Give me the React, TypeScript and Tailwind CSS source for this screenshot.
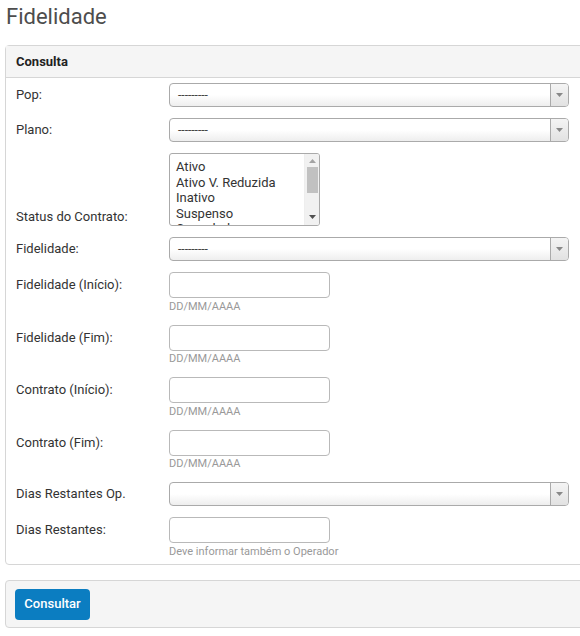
const font = { fontFamily: "Roboto, 'Liberation Sans', sans-serif" };

const Select = ({ text = "---------" }: { text?: string }) => (
  <div className="flex h-[24px] w-[400px] rounded-[4px] border border-[#aaa] bg-gradient-to-b from-white from-50% to-[#eeeeee] overflow-hidden">
    <div className="flex-1 pl-[8px] text-[12px] leading-[22px] text-[#444]">{text}</div>
    <div className="flex w-[18px] items-center justify-center border-l border-[#aaa] bg-gradient-to-b from-[#f4f4f4] to-[#e2e2e2]">
      <svg width="7" height="4" viewBox="0 0 7 4">
        <path d="M0 0h7L3.5 4z" fill="#888" />
      </svg>
    </div>
  </div>
);

const DateInput = ({ help }: { help: string }) => (
  <div className="flex flex-col">
    <div className="h-[26px] w-[161px] rounded-[4px] border border-[#b9b9b9] bg-white" />
    <div className="mt-[1.5px] text-[11px] leading-[14px] text-[#999]">{help}</div>
  </div>
);

const Row = ({ label, h, children }: { label: string; h: number; children: React.ReactNode }) => (
  <div className="flex items-start">
    <div
      className="w-[153px] shrink-0 flex items-center text-[13px] text-[#333]"
      style={{ height: h }}
    >
      {label}
    </div>
    {children}
  </div>
);

const statusOptions = ["Ativo", "Ativo V. Reduzida", "Inativo", "Suspenso", "Cancelado"];

const App = () => {
  return (
    <div className="w-[580px] h-[636px] overflow-hidden bg-white" style={font}>
      <h1 className="pl-[6px] pt-[3px] text-[22px] leading-[28px] font-normal text-[#4d4d4d]">Fidelidade</h1>

      <div className="ml-[5px] mt-[14px] w-[600px] rounded-l-[4px] border border-[#d6d6d6]">
        <div className="h-[32px] border-b border-[#d6d6d6] bg-[#f5f5f5] pl-[10px] text-[13px] font-bold leading-[31px] text-[#222]">
          Consulta
        </div>

        <div className="flex flex-col gap-[11px] pl-[10px] pt-[5px] pb-[5px]">
          <Row label="Pop:" h={24}>
            <Select />
          </Row>
          <Row label="Plano:" h={24}>
            <Select />
          </Row>
          <div className="flex items-end">
            <div className="w-[153px] shrink-0 pb-[1px] text-[13px] leading-[16px] text-[#333]">Status do Contrato:</div>
            <div className="flex h-[73px] w-[151px] overflow-hidden rounded-[3px] border border-[#aaa] bg-white">
              <div className="flex-1 pl-[6px] pt-[5px] text-[13px] leading-[15.5px] text-[#333]">
                {statusOptions.map((o) => (
                  <div key={o} className="whitespace-nowrap">{o}</div>
                ))}
              </div>
              <div className="flex w-[15px] flex-col items-center bg-[#f1f1f1] border-l border-[#eee]">
                <svg className="mt-[5px]" width="7" height="4" viewBox="0 0 7 4">
                  <path d="M3.5 0L7 4H0z" fill="#a3a3a3" />
                </svg>
                <div className="mt-[4px] h-[26px] w-[11px] bg-[#c1c1c1]" />
                <div className="flex-1" />
                <svg className="mb-[6px]" width="7" height="4" viewBox="0 0 7 4">
                  <path d="M0 0h7L3.5 4z" fill="#505050" />
                </svg>
              </div>
            </div>
          </div>
          <Row label="Fidelidade:" h={24}>
            <Select />
          </Row>
          <Row label="Fidelidade (Início):" h={26}>
            <DateInput help="DD/MM/AAAA" />
          </Row>
          <Row label="Fidelidade (Fim):" h={26}>
            <DateInput help="DD/MM/AAAA" />
          </Row>
          <Row label="Contrato (Início):" h={26}>
            <DateInput help="DD/MM/AAAA" />
          </Row>
          <Row label="Contrato (Fim):" h={26}>
            <DateInput help="DD/MM/AAAA" />
          </Row>
          <Row label="Dias Restantes Op." h={24}>
            <Select text="" />
          </Row>
          <Row label="Dias Restantes:" h={26}>
            <DateInput help="Deve informar também o Operador" />
          </Row>
        </div>
      </div>

      <div className="ml-[5px] mt-[15px] w-[600px] rounded-l-[4px] border border-[#d6d6d6] bg-[#f5f5f5] pt-[8px] pb-[7px] pl-[9px]">
        <button className="h-[31px] w-[75px] rounded-[4px] bg-[#0b7dc1] text-[13px] font-medium text-white">
          Consultar
        </button>
      </div>
    </div>
  );
};

export default App;
